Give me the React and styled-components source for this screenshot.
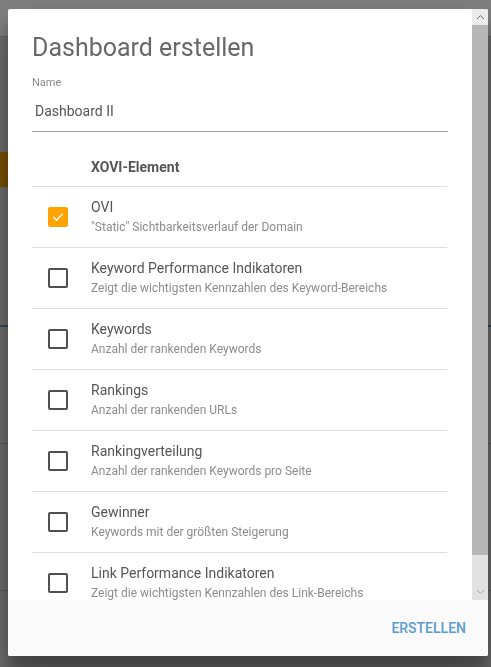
import React, { useState } from "react";
import styled, { createGlobalStyle } from "styled-components";

const GlobalStyle = createGlobalStyle`
  html, body { margin: 0; height: 100%; }
  body {
    font-family: Roboto, "Noto Sans", Arial, sans-serif;
    background: #dcdcdc;
    overflow: hidden;
  }
  * { box-sizing: border-box; }
`;

/* ---------- page behind the dialog ---------- */
const Page = styled.div`
  min-height: 100vh;
  background: #dcdcdc;
  display: flex;
  flex-direction: column;
`;
const TopBar = styled.header`
  height: 37px;
  flex-shrink: 0;
  background: #ffffff;
  border-bottom: 1px solid #c4c4c4;
`;
const Main = styled.main`
  display: flex;
  flex-direction: column;
  padding-top: 115px;
`;
const OrangeTab = styled.div`
  width: 220px;
  height: 35px;
  background: #f3a400;
`;
const Rule = styled.div`
  height: ${(p) => p.$h || 1}px;
  margin-top: ${(p) => p.$mt}px;
  background: ${(p) => p.$c};
`;

const Overlay = styled.div`
  position: fixed;
  inset: 0;
  background: rgba(0, 0, 0, 0.5);
`;

/* ---------- dialog ---------- */
const Dialog = styled.div`
  position: fixed;
  left: 8px;
  top: 9px;
  width: 480px;
  height: 647px;
  background: #ffffff;
  border-radius: 2px;
  box-shadow: 0 19px 38px rgba(0, 0, 0, 0.3), 0 15px 12px rgba(0, 0, 0, 0.22);
  display: flex;
  flex-direction: column;
  overflow: hidden;
`;

const Body = styled.div`
  flex: 1;
  min-height: 0;
  display: flex;
`;

const Content = styled.div`
  flex: 1;
  min-width: 0;
  overflow-y: auto;
  scrollbar-width: none;
  padding: 23px 24px 19px 24px;
  &::-webkit-scrollbar { display: none; }
`;

/* drawn scrollbar (headless capture hides native ones) */
const Rail = styled.div`
  width: 16px;
  flex-shrink: 0;
  display: flex;
  flex-direction: column;
  background: #e2e2e2;
`;
const RailButton = styled.div`
  height: 16px;
  flex-shrink: 0;
  display: flex;
  align-items: center;
  justify-content: center;
  background: ${(p) => (p.$top ? "#ebebeb" : "#e2e2e2")};
`;
const Track = styled.div`
  flex: 1;
  display: flex;
  flex-direction: column;
`;
const Thumb = styled.div`
  background: #b7b7b7;
`;

const Title = styled.h1`
  margin: 0;
  font-size: 25px;
  line-height: 32px;
  font-weight: 400;
  color: #686868;
`;

const FieldLabel = styled.label`
  display: block;
  margin-top: 12px;
  font-size: 11px;
  line-height: 13px;
  color: #8a8a8a;
`;

const TextInput = styled.input`
  display: block;
  width: 100%;
  border: none;
  border-bottom: 1px solid #9e9e9e;
  outline: none;
  padding: 12px 2px 10px 3px;
  font-family: inherit;
  font-size: 14px;
  line-height: 20px;
  height: 43px;
  color: #555555;
  background: transparent;
`;

const Table = styled.div`
  margin-top: 14px;
  display: flex;
  flex-direction: column;
  margin-right: 1px;
`;

const HeaderRow = styled.div`
  display: grid;
  grid-template-columns: 56px 1fr;
  height: 41px;
  padding-top: 2px;
  align-items: center;
  border-bottom: 1px solid #dedede;
`;

const HeaderCell = styled.div`
  padding-left: 3px;
  font-size: 14px;
  line-height: 20px;
  font-weight: 700;
  color: #565656;
`;

const Row = styled.div`
  display: grid;
  grid-template-columns: 56px 1fr;
  height: 61px;
  border-bottom: 1px solid #dedede;
`;

const CheckCell = styled.div`
  display: flex;
  align-items: center;
  padding-left: 16px;
`;

const Box = styled.button`
  width: 20px;
  height: 20px;
  padding: 0;
  border-radius: 2px;
  cursor: pointer;
  display: flex;
  align-items: center;
  justify-content: center;
  border: ${(p) => (p.$checked ? "none" : "2px solid #505050")};
  background: ${(p) => (p.$checked ? "#ffa300" : "transparent")};
`;

const TextCell = styled.div`
  padding: 10px 0 0 3px;
  display: flex;
  flex-direction: column;
`;

const RowTitle = styled.div`
  font-size: 14px;
  line-height: 20px;
  color: #555555;
`;

const RowDesc = styled.div`
  margin-top: 2px;
  font-size: 12px;
  line-height: 16px;
  color: #8c8c8c;
`;

const Footer = styled.div`
  height: 56px;
  flex-shrink: 0;
  background: #fafafa;
  display: flex;
  align-items: center;
  justify-content: flex-end;
  padding-right: 14px;
`;

const ActionButton = styled.button`
  border: none;
  background: none;
  padding: 0 8px;
  height: 36px;
  font-family: inherit;
  font-size: 14px;
  font-weight: 500;
  text-transform: uppercase;
  color: #5a9bd3;
  cursor: pointer;
`;

const items = [
  { title: "OVI", desc: "\"Static\" Sichtbarkeitsverlauf der Domain", checked: true },
  { title: "Keyword Performance Indikatoren", desc: "Zeigt die wichtigsten Kennzahlen des Keyword-Bereichs" },
  { title: "Keywords", desc: "Anzahl der rankenden Keywords" },
  { title: "Rankings", desc: "Anzahl der rankenden URLs" },
  { title: "Rankingverteilung", desc: "Anzahl der rankenden Keywords pro Seite" },
  { title: "Gewinner", desc: "Keywords mit der größten Steigerung" },
  { title: "Link Performance Indikatoren", desc: "Zeigt die wichtigsten Kennzahlen des Link-Bereichs" },
];

function Check() {
  return (
    <svg width="14" height="14" viewBox="0 0 24 24" aria-hidden="true">
      <path d="M4.5 12.5l5 5L19.5 7" fill="none" stroke="#fff" strokeWidth="2.4" strokeLinecap="round" strokeLinejoin="round" />
    </svg>
  );
}

function Chevron({ up, color }) {
  return (
    <svg width="9" height="6" viewBox="0 0 9 6" aria-hidden="true">
      <path d={up ? "M1 5L4.5 1.5L8 5" : "M1 1L4.5 4.5L8 1"} fill="none" stroke={color} strokeWidth="1" />
    </svg>
  );
}

export default function App() {
  const [checked, setChecked] = useState(items.map((i) => !!i.checked));
  const [name, setName] = useState("Dashboard II");
  const visibleRatio = 0.948;

  return (
    <>
      <GlobalStyle />
      <Page>
        <TopBar />
        <Main>
          <OrangeTab />
          <Rule $mt={41} $c="#d2d2d2" />
          <Rule $mt={96} $h={2} $c="#5a93c3" />
          <Rule $mt={116} $c="#b4b4b4" />
          <Rule $mt={146} $c="#b4b4b4" />
        </Main>
      </Page>
      <Overlay />
      <Dialog role="dialog">
        <Body>
          <Content>
            <Title>Dashboard erstellen</Title>
            <FieldLabel htmlFor="dash-name">Name</FieldLabel>
            <TextInput id="dash-name" value={name} onChange={(e) => setName(e.target.value)} />
            <Table>
              <HeaderRow>
                <div />
                <HeaderCell>XOVI-Element</HeaderCell>
              </HeaderRow>
              {items.map((it, i) => (
                <Row key={it.title}>
                  <CheckCell>
                    <Box
                      $checked={checked[i]}
                      onClick={() => setChecked((c) => c.map((v, j) => (j === i ? !v : v)))}
                    >
                      {checked[i] && <Check />}
                    </Box>
                  </CheckCell>
                  <TextCell>
                    <RowTitle>{it.title}</RowTitle>
                    <RowDesc>{it.desc}</RowDesc>
                  </TextCell>
                </Row>
              ))}
            </Table>
          </Content>
          <Rail>
            <RailButton $top>
              <Chevron up color="#707070" />
            </RailButton>
            <Track>
              <Thumb style={{ height: `${visibleRatio * 100}%` }} />
            </Track>
            <RailButton>
              <Chevron color="#a0a0a0" />
            </RailButton>
          </Rail>
        </Body>
        <Footer>
          <ActionButton>Erstellen</ActionButton>
        </Footer>
      </Dialog>
    </>
  );
}
